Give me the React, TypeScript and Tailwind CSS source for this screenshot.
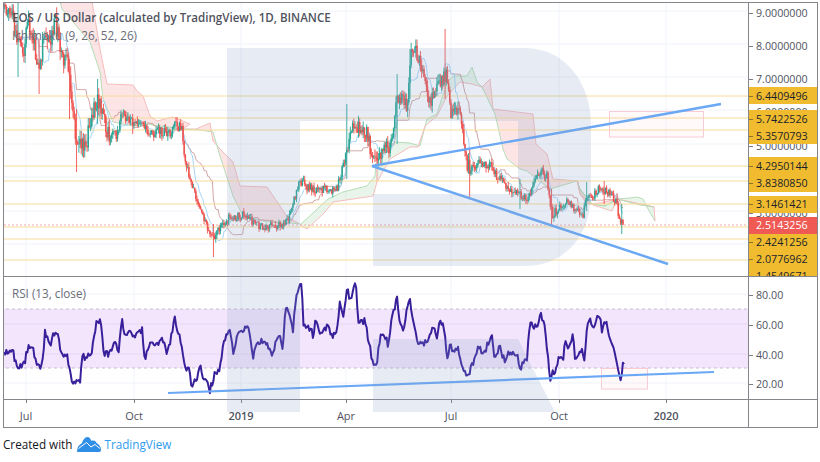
import React from "react";

type P = [number, number];

const rng = (seed: number) => {
  let s = seed;
  return () => {
    s = (s * 1664525 + 1013904223) % 4294967296;
    return s / 4294967296;
  };
};

const interp = (pts: P[], x: number) => {
  if (x <= pts[0][0]) return pts[0][1];
  for (let i = 1; i < pts.length; i++) {
    if (x <= pts[i][0]) {
      const [a, b] = pts[i - 1];
      const [c, d] = pts[i];
      return b + ((d - b) * (x - a)) / (c - a);
    }
  }
  return pts[pts.length - 1][1];
};

const STEP = 1.17;
const END = 623;

const priceAnchors: P[] = [
  [4, 10], [12, 18], [18, 45], [23, 58], [28, 25], [35, 50], [39, 78], [45, 28], [50, 45], [55, 22],
  [62, 55], [68, 68], [72, 110], [77, 148], [87, 140], [93, 115], [98, 100], [107, 135], [117, 135],
  [122, 115], [133, 122], [143, 122], [147, 135], [160, 132], [170, 134], [175, 124], [182, 132],
  [185, 160], [190, 178], [195, 197], [200, 208], [208, 232], [213, 240], [227, 220], [240, 217],
  [248, 215], [255, 227], [283, 227], [290, 215], [297, 190], [303, 180], [307, 190], [320, 190],
  [337, 190], [342, 172], [347, 150], [350, 130], [360, 130], [367, 135], [372, 158], [377, 155],
  [390, 147], [397, 100], [407, 105], [412, 45], [420, 62], [425, 85], [430, 103], [437, 88], [447, 75],
  [450, 112], [460, 115], [465, 158], [470, 172], [480, 162], [490, 167], [500, 180], [507, 190],
  [517, 190], [522, 200], [530, 197], [533, 183], [541, 172], [547, 178], [552, 216], [560, 210],
  [567, 203], [577, 212], [583, 216], [587, 197], [592, 200], [598, 190], [605, 192], [612, 197],
  [617, 205], [620, 226], [623, 223],
];

const spikes: Record<number, [number | null, number | null]> = {
  18: [0, 78], 39: [40, 95], 77: [110, 173], 70: [60, 120], 98: [80, 125], 133: [115, 135],
  186: [150, 174], 213: [225, 258], 303: [161, 195], 347: [105, 180], 397: [75, 145], 372: [140, 166],
  413: [20, 100], 445: [30, 100], 470: [150, 198], 520: [180, 210], 552: [190, 226], 587: [183, 212],
  604: [182, 205], 622: [205, 235], 410: [50, 100],
};

type Candle = { x: number; o: number; c: number; h: number; l: number };

const volAt = (x: number) => (x < 110 ? 12 : x < 190 ? 7 : x < 295 ? 5.5 : x < 345 ? 6 : x < 470 ? 10 : x < 560 ? 6.5 : 5);

const candles: Candle[] = (() => {
  const r = rng(17);
  const out: Candle[] = [];
  let prev = interp(priceAnchors, 4);
  for (let x = 4; x <= END; x += STEP) {
    const v = volAt(x);
    const base = interp(priceAnchors, x);
    const c = base + (r() - 0.5) * v * 1.5;
    const o = prev;
    let h = Math.min(o, c) - r() * v * 0.7;
    let l = Math.max(o, c) + r() * v * 0.7;
    const sp = spikes[Math.round(x)];
    if (sp) {
      if (sp[0] !== null) h = sp[0];
      if (sp[1] !== null) l = sp[1];
    }
    out.push({ x, o, c, h, l });
    prev = c;
  }
  return out;
})();

const wick = (list: Candle[]) => list.map((k) => `M${k.x.toFixed(2)} ${k.h.toFixed(1)}V${k.l.toFixed(1)}`).join("");
const body = (list: Candle[]) => list.map((k) => `M${k.x.toFixed(2)} ${k.o.toFixed(1)}V${k.c.toFixed(1)}`).join("");
const ups = candles.filter((k) => k.c <= k.o);
const downs = candles.filter((k) => k.c > k.o);

const midline = (n: number) =>
  candles
    .map((k, i) => {
      const w = candles.slice(Math.max(0, i - n + 1), i + 1);
      const hh = Math.min(...w.map((q) => q.h));
      const ll = Math.max(...w.map((q) => q.l));
      return `${i ? "L" : "M"}${k.x.toFixed(1)} ${((hh + ll) / 2).toFixed(1)}`;
    })
    .join("");

const toPath = (pts: P[]) => pts.map((p, i) => `${i ? "L" : "M"}${p[0]} ${p[1]}`).join("");

const clouds: { top: P[]; low: P[]; kind: "red" | "green" }[] = [
  {
    kind: "red",
    top: [[60, 2], [92, 2], [100, 50], [107, 85], [133, 86], [137, 92], [143, 97], [150, 117], [157, 122], [173, 118], [190, 125], [183, 130]],
    low: [[60, 2], [62, 10], [90, 43], [100, 73], [103, 100], [113, 123], [133, 127], [147, 125], [160, 127], [183, 130]],
  },
  {
    kind: "red",
    top: [[183, 130], [196, 130], [210, 124], [213, 142], [220, 150], [233, 163], [240, 187], [267, 188], [280, 207], [287, 218], [300, 225]],
    low: [[183, 130], [200, 131], [213, 133], [220, 157], [233, 197], [243, 217], [267, 223], [283, 223], [300, 225]],
  },
  {
    kind: "green",
    top: [[300, 226], [328, 200], [343, 193], [367, 187], [375, 177], [377, 153]],
    low: [[300, 226], [307, 230], [325, 213], [333, 203], [373, 197], [377, 183], [377, 153]],
  },
  {
    kind: "green",
    top: [[377, 153], [395, 143], [410, 144], [420, 147], [427, 120], [437, 115], [447, 83], [453, 77], [467, 77], [472, 68], [477, 83], [482, 88]],
    low: [[377, 153], [377, 183], [390, 160], [410, 148], [418, 148], [425, 127], [437, 117], [447, 97], [460, 83], [472, 85], [482, 88]],
  },
  {
    kind: "red",
    top: [[482, 88], [490, 80], [493, 110], [533, 115], [536, 145], [547, 155], [553, 180], [578, 182], [580, 195], [587, 205], [600, 204], [617, 200]],
    low: [[482, 88], [495, 115], [503, 150], [507, 160], [520, 170], [527, 172], [537, 180], [550, 190], [577, 182], [580, 190], [592, 205], [605, 207], [617, 200]],
  },
  {
    kind: "green",
    top: [[577, 182], [580, 190], [592, 205], [605, 207], [617, 200]],
    low: [[577, 182], [580, 195], [590, 205], [612, 212], [617, 200]],
  },
  {
    kind: "green",
    top: [[617, 200], [630, 199], [637, 198], [643, 200], [648, 210], [655, 222]],
    low: [[617, 200], [640, 205], [654, 208], [655, 222]],
  },
  {
    kind: "red",
    top: [[617, 200], [640, 205], [654, 208]],
    low: [[617, 200], [640, 206], [654, 208]],
  },
];

const yellowLines = [97, 119, 131, 167, 182, 205, 228, 240, 261];
const priceGrid = [12, 45, 78, 111, 145, 178, 212, 245];
const months = [26, 134, 241, 346, 451, 559, 666];

const rsiA: P[] = [
  [4, 355], [7, 352], [13, 353], [17, 370], [20, 368], [25, 362], [28, 347], [33, 348], [37, 367], [42, 368],
  [45, 332], [50, 347], [53, 335], [58, 338], [62, 358], [67, 358], [72, 383], [80, 384], [82, 353], [85, 362],
  [92, 352], [95, 330], [98, 320], [102, 327], [103, 353], [110, 355], [115, 340], [118, 357], [122, 320],
  [125, 340], [128, 333], [135, 338], [142, 330], [145, 365], [148, 347], [157, 345], [165, 340], [166, 358],
  [170, 343], [175, 320], [180, 340], [185, 370], [188, 368], [192, 387], [197, 380], [200, 365], [203, 377],
  [210, 391], [215, 375], [220, 370], [224, 340], [230, 332], [233, 353], [237, 337], [248, 327], [253, 358],
  [258, 342], [267, 343], [272, 357], [278, 335], [283, 348], [285, 313], [288, 310], [293, 330], [296, 300],
  [298, 290], [302, 287], [303, 328], [312, 330], [313, 340], [315, 323], [322, 335], [327, 327], [333, 337],
  [338, 327], [340, 303], [343, 318], [347, 290], [350, 300], [356, 285], [358, 322], [365, 322], [372, 360],
  [377, 368], [378, 347], [383, 332], [388, 345], [392, 317], [397, 300], [400, 323], [403, 332], [408, 303],
  [410, 300], [413, 322], [417, 343], [422, 345], [427, 343], [433, 328], [437, 337], [440, 320], [445, 333],
  [447, 365], [450, 347], [455, 353], [458, 348], [462, 368], [467, 380], [475, 358], [478, 345], [483, 355],
  [492, 338], [495, 360], [500, 347], [505, 365], [508, 355], [517, 355], [520, 371], [527, 358], [530, 323],
  [537, 330], [540, 315], [545, 325], [550, 383], [552, 373], [557, 370], [558, 357], [563, 360], [565, 340],
  [568, 347], [573, 337], [575, 357], [582, 352], [584, 365], [587, 328], [590, 320], [593, 330], [599, 313],
  [602, 332], [605, 320], [610, 340], [614, 350], [618, 370], [621, 383], [623, 363], [625, 367],
];

const rsiPath = (() => {
  const r = rng(5);
  const pts: string[] = [];
  let i = 0;
  for (let x = 4; x <= 625; x += STEP) {
    const n = x > 610 ? 0 : (r() - 0.5) * 7;
    pts.push(`${i++ ? "L" : "M"}${x.toFixed(1)} ${(interp(rsiA, x) + n).toFixed(1)}`);
  }
  return pts.join("");
})();

const FONT = "font-['Open_Sans','Noto_Sans',sans-serif]";

const yellowBlocks = [
  { top: 87, h: 17 },
  { top: 110, h: 34 },
  { top: 157, h: 35 },
  { top: 196, h: 17 },
  { top: 234, h: 43 },
];

const priceLabels = [
  { y: 12, t: "9.0000000" },
  { y: 45, t: "8.0000000" },
  { y: 78, t: "7.0000000" },
  { y: 111, t: "6.0000000" },
  { y: 145, t: "5.0000000" },
  { y: 212, t: "3.0000000" },
];
const yellowLabels = [
  { y: 96, t: "6.4409496" },
  { y: 119, t: "5.7422526" },
  { y: 136, t: "5.3570793" },
  { y: 166, t: "4.2950144" },
  { y: 183, t: "3.8380850" },
  { y: 204, t: "3.1461421" },
  { y: 242, t: "2.4241256" },
  { y: 259, t: "2.0776962" },
  { y: 276, t: "1.4549671" },
];
const rsiLabels = [
  { y: 295, t: "80.00" },
  { y: 325, t: "60.00" },
  { y: 355, t: "40.00" },
  { y: 384, t: "20.00" },
];

const TickLabel = ({ y, t, offset, dark }: { y: number; t: string; offset: number; dark?: boolean }) => (
  <div
    className={`absolute left-0 flex items-center h-[14px] text-[10.7px] leading-none ${dark ? "text-[#1a1f2b]" : "text-[#50535e]"}`}
    style={{ top: y - offset - 7 }}
  >
    <span className={`w-[4px] h-px mr-[3px] ${dark ? "bg-[#8a7430]" : "bg-[#7b7e88]"}`} />
    {t}
  </div>
);

const timeLabels = [
  { x: 26, t: "Jul" },
  { x: 134, t: "Oct" },
  { x: 241, t: "2019", b: true },
  { x: 346, t: "Apr" },
  { x: 451, t: "Jul" },
  { x: 559, t: "Oct" },
  { x: 666, t: "2020", b: true },
];

export default function App() {
  return (
    <div className={`relative w-[820px] h-[462px] bg-white overflow-hidden pt-[2px] pl-[3px] ${FONT}`}>
      <div className="relative w-[815px] h-[425.5px] border-[1.5px] border-[#84868c] flex flex-col">
        {/* price pane */}
        <div className="flex h-[274px] border-b-[1.5px] border-[#84868c]">
          <div className="relative w-[744px] h-full overflow-hidden">
            <svg viewBox="4 4 744 273" width={744} height={273} className="block blur-[0.4px]">
              <g stroke="#f0f3fa" strokeWidth="1" fill="none">
                {months.map((x) => <path key={x} d={`M${x} 0V277`} />)}
                {priceGrid.map((y) => <path key={y} d={`M0 ${y}H748`} />)}
              </g>
              {clouds.map((c, i) => (
                <g key={i}>
                  <path
                    d={toPath(c.top) + [...c.low].reverse().map((p) => `L${p[0]} ${p[1]}`).join("") + "Z"}
                    fill={c.kind === "red" ? "#ef5350" : "#4caf50"}
                    fillOpacity={c.kind === "red" ? 0.15 : 0.12}
                  />
                  <path d={toPath(c.top)} fill="none" stroke={c.kind === "red" ? "#f6bcbc" : "#b5ddb7"} strokeWidth="1" />
                  <path d={toPath(c.low)} fill="none" stroke={c.kind === "red" ? "#b5ddb7" : "#f6bcbc"} strokeWidth="1" />
                </g>
              ))}
              <path d={midline(26)} fill="none" stroke="#c08080" strokeWidth="0.9" strokeOpacity="0.8" />
              <path d={midline(9)} fill="none" stroke="#9ccff8" strokeWidth="0.9" />
              {yellowLines.map((y) => (
                <path key={y} d={`M0 ${y}H748`} stroke="#f7dc9a" strokeWidth="1" />
              ))}
              <path d="M0 226H748" stroke="#f4a9a9" strokeWidth="1" strokeDasharray="2 2" />
              <path d={wick(ups)} stroke="#2ba596" strokeWidth="0.9" fill="none" />
              <path d={wick(downs)} stroke="#ef5350" strokeWidth="0.9" fill="none" />
              <path d={body(ups)} stroke="#2ba596" strokeWidth="1.5" fill="none" />
              <path d={body(downs)} stroke="#ef5350" strokeWidth="1.5" fill="none" />
              <rect x="609.5" y="112.5" width="94" height="25.5" fill="#ffc8d2" fillOpacity="0.1" stroke="#f8ccd4" strokeWidth="1" />
              <path d="M372 167L721 105M372 167L668 265" stroke="#6aa8f5" strokeWidth="2.4" fill="none" />
            </svg>
            <div className="absolute left-[8px] top-[7px] flex flex-col gap-[1px] text-[#50535e]">
              <div className="text-[11.6px] leading-[16px] font-semibold whitespace-nowrap">EOS / US Dollar (calculated by TradingView), 1D, BINANCE</div>
              <div className="text-[11.7px] leading-[16px] whitespace-nowrap text-[#6a6d78]">Ichimoku (9, 26, 52, 26)</div>
            </div>
          </div>
          <div className="relative flex-1 border-l-[1.5px] border-[#84868c] overflow-hidden">
            {priceLabels.map((l) => <TickLabel key={l.t} y={l.y} t={l.t} offset={2} />)}
            {yellowBlocks.map((b) => (
              <div key={b.top} className="absolute left-0 right-0 bg-[#f0bb2e]" style={{ top: b.top - 3.5, height: b.h }} />
            ))}
            <div className="absolute left-0 right-0 h-[17px] top-[213.5px] bg-[#f05a55]" />
            {yellowLabels.map((l) => <TickLabel key={l.t} y={l.y} t={l.t} offset={2.5} dark />)}
            <div className="absolute left-0 top-[213.5px] h-[17px] flex items-center text-[10.7px] leading-none text-white">
              <span className="w-[7px]" />2.5143256
            </div>
          </div>
        </div>
        {/* RSI pane */}
        <div className="flex h-[123px] border-b-[1.5px] border-[#84868c]">
          <div className="relative w-[744px] h-full overflow-hidden">
            <svg viewBox="4 278 744 122" width={744} height={122} className="block blur-[0.3px]">
              <g stroke="#f0f3fa" strokeWidth="1" fill="none">
                {months.map((x) => <path key={x} d={`M${x} 270V401`} />)}
                {[295, 384].map((y) => <path key={y} d={`M0 ${y}H748`} />)}
              </g>
              <rect x="0" y="310" width="748" height="59" fill="#f3e5fc" />
              <g stroke="#ead6f5" strokeWidth="1" fill="none">
                {[325, 355].map((y) => <path key={y} d={`M0 ${y}H748`} />)}
              </g>
              <path d="M0 310H748M0 369H748" stroke="#c8bcd0" strokeWidth="1" strokeDasharray="3 3" fill="none" />
              <rect x="601.5" y="369.5" width="46" height="20.5" fill="#ffc8d2" fillOpacity="0.1" stroke="#f8ccd4" strokeWidth="1" />
              <path d={rsiPath} fill="none" stroke="#38209b" strokeWidth="2" strokeLinejoin="round" />
              <path d="M168 394L714 373" stroke="#6aa8f5" strokeWidth="2.2" fill="none" />
            </svg>
            <div className="absolute left-[8px] top-[8px] text-[11.7px] leading-[16px] text-[#6a6d78]">RSI (13, close)</div>
          </div>
          <div className="relative flex-1 border-l-[1.5px] border-[#84868c]">
            {rsiLabels.map((l) => <TickLabel key={l.t} y={l.y} t={l.t} offset={276.5} />)}
          </div>
        </div>
        {/* time axis */}
        <div className="flex flex-1">
          <div className="relative w-[744px] h-full">
            {timeLabels.map((l) => (
              <div key={l.x + l.t} className="absolute top-0 flex flex-col items-center w-[40px]" style={{ left: l.x - 24 }}>
                <span className="w-px h-[3px] bg-[#7b7e88]" />
                <span className={`mt-[5px] text-[11px] leading-[16px] text-[#50535e] ${l.b ? "font-semibold" : ""}`}>{l.t}</span>
              </div>
            ))}
          </div>
          <div className="flex-1 border-l-[1.5px] border-[#84868c]" />
        </div>
        {/* RoboForex watermark */}
        <svg viewBox="4 4 811 423" width={811} height={423} className="absolute left-0 top-0 pointer-events-none">
          <path
            fillRule="evenodd"
            fill="rgb(135,160,200)"
            fillOpacity="0.2"
            d="M227 49H525C566 49 591 85 591 125V195C591 235 566 267 525 267H373V195H518V122H300V413H227Z"
          />
          <path fill="rgb(135,160,200)" fillOpacity="0.2" d="M373 340H518L555 413H373Z" />
        </svg>
      </div>
      <div className="flex items-center h-[20px] mt-[7.5px] text-[11.7px] leading-none text-[#131722]">
        <span>Created with</span>
        <svg viewBox="0 0 24 15" width={24} height={15} className="ml-[5px] mr-[3px] -translate-y-px">
          <path fill="#2f8fe6" d="M0 15L0.5 11C1.5 8 3.5 7.5 5 6C6 3 8 0 10.5 0C12.5 0 13.5 2 14.5 4C16 3 18.5 3.5 19.5 6C21.5 7 24 9.5 24 12.5C24 14.5 23 15 22 15Z" />
          <path fill="none" stroke="#fff" strokeWidth="1" d="M1.5 11.5L9.5 5.5L14 10L18 7.5L23 11.5" />
        </svg>
        <span className="text-[#2f9bec]">TradingView</span>
      </div>
    </div>
  );
}
